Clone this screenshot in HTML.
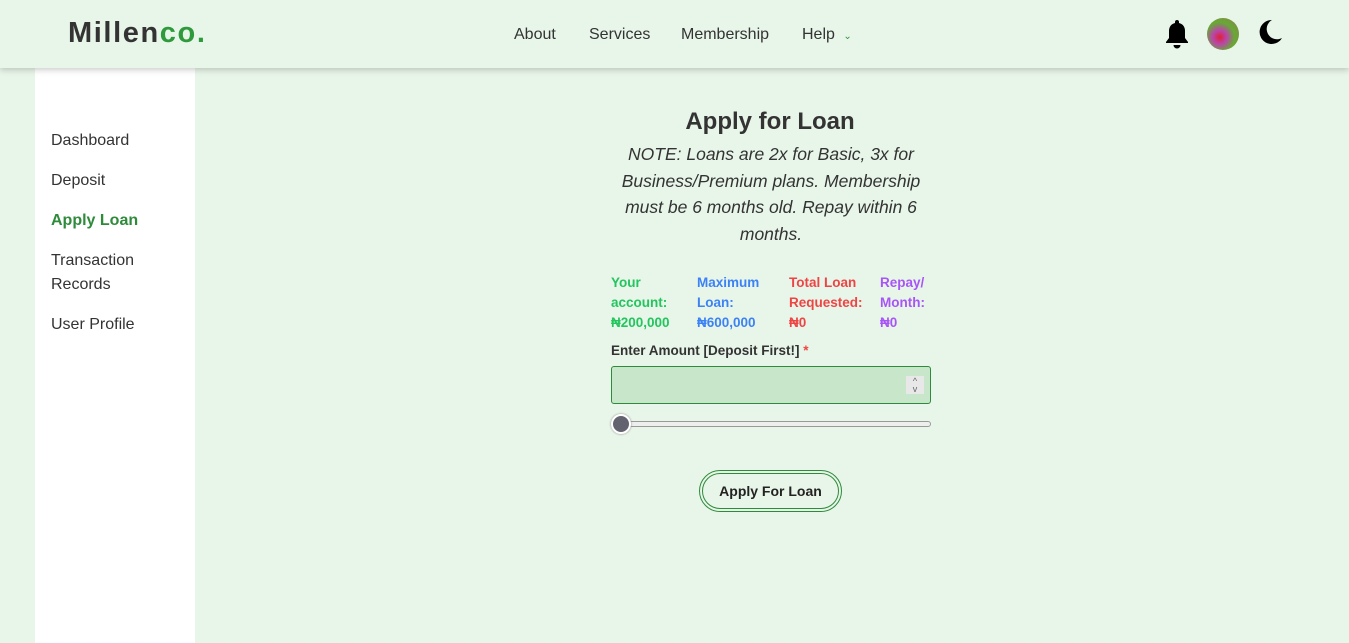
<!DOCTYPE html>
<html><head><meta charset="utf-8"><style>
*{box-sizing:border-box;margin:0;padding:0}
body{width:1349px;height:643px;overflow:hidden;background:#e8f5e9;font-family:"Liberation Sans",sans-serif;color:#212121;position:relative}
.hdr{position:absolute;left:0;top:0;width:1349px;height:68px;background:#e8f5e9;box-shadow:0 2px 6px rgba(0,0,0,.2);z-index:2}
.logo{position:absolute;left:68px;top:17px;font-size:29px;font-weight:bold;color:#333;letter-spacing:1.6px}
.logo span{color:#2e9a3c}
.nav{position:absolute;top:26px;font-size:16px;color:#333}
.side{position:absolute;left:35px;top:68px;width:160px;height:575px;background:#fff}
.side div{position:absolute;left:16px;font-size:16px;color:#333;line-height:24px}
.c{position:absolute;text-align:center}
.st{position:absolute;top:273px;font-size:13.5px;font-weight:bold;line-height:20px}
</style></head><body>
<div class="hdr">
<div class="logo">Millen<span>co.</span></div>
<div class="nav" style="left:514px">About</div>
<div class="nav" style="left:589px">Services</div>
<div class="nav" style="left:681px">Membership</div>
<div class="nav" style="left:802px">Help <span style="font-size:10px;color:#2e9a3c;margin-left:4px">&#8964;</span></div>
<svg style="position:absolute;left:1164px;top:19px" width="26" height="30" viewBox="0 0 26 30"><path d="M13 1c1.2 0 2 .8 2 2v1c4 1 6 4 6 8v7l3 4v1H2v-1l3-4v-7c0-4 2-7 6-8V3c0-1.2.8-2 2-2z" fill="#000"/><path d="M9.5 26h7a3.5 3.5 0 0 1-7 0z" fill="#000"/></svg>
<div style="position:absolute;left:1207px;top:18px;width:32px;height:32px;border-radius:50%;background:radial-gradient(circle at 40% 60%,#d23 0,#b4a 25%,#6a3 55%,#975 100%)"></div>
<svg style="position:absolute;left:1257px;top:19px" width="26" height="26" viewBox="0 0 26 26"><path d="M15 1A12 12 0 1 0 25 19 10 10 0 0 1 15 1z" fill="#000"/></svg>
</div>
<div class="side">
<div style="top:61px">Dashboard</div>
<div style="top:101px">Deposit</div>
<div style="top:141px;color:#2e8b3a;font-weight:bold">Apply Loan</div>
<div style="top:181px">Transaction<br>Records</div>
<div style="top:245px">User Profile</div>
</div>
<div class="c" style="left:570px;width:400px;top:108px;font-size:24px;font-weight:bold;color:#333">Apply for Loan</div>
<div class="c" style="left:611px;width:320px;top:141px;font-size:17.5px;font-style:italic;line-height:26.5px;color:#333">NOTE: Loans are 2x for Basic, 3x for Business/Premium plans. Membership must be 6 months old. Repay within 6 months.</div>
<div class="st" style="left:611px;color:#22c55e">Your<br>account:<br>₦200,000</div>
<div class="st" style="left:697px;color:#3b82f6">Maximum<br>Loan:<br>₦600,000</div>
<div class="st" style="left:789px;color:#ef4444">Total Loan<br>Requested:<br>₦0</div>
<div class="st" style="left:880px;color:#a855f7">Repay/<br>Month:<br>₦0</div>
<div style="position:absolute;left:611px;top:343px;font-size:13.5px;font-weight:bold;color:#333">Enter Amount [Deposit First!] <span style="color:#ef4444">*</span></div>
<div style="position:absolute;left:611px;top:366px;width:320px;height:38px;background:#c8e6c9;border:1px solid #2e8b3a;border-radius:3px"><div style="position:absolute;right:6px;top:9px;width:18px;height:18px;background:#e8e8e8;font-size:9px;line-height:8px;text-align:center;color:#666;padding-top:1px">^<br>v</div></div>
<div style="position:absolute;left:615px;top:421px;width:316px;height:6px;border:1px solid #999;border-radius:3px;background:#eee"></div>
<div style="position:absolute;left:611px;top:414px;width:20px;height:20px;border-radius:50%;background:#636370;border:2px solid #fff;box-shadow:0 0 2px #888"></div>
<div style="position:absolute;left:699px;top:470px;width:143px;height:42px;border:1px solid #2e8b3a;border-radius:21px;padding:2px"><div style="width:100%;height:100%;border:1px solid #2e8b3a;border-radius:19px;text-align:center;line-height:34px;font-size:14px;font-weight:bold;color:#222">Apply For Loan</div></div>
</body></html>
